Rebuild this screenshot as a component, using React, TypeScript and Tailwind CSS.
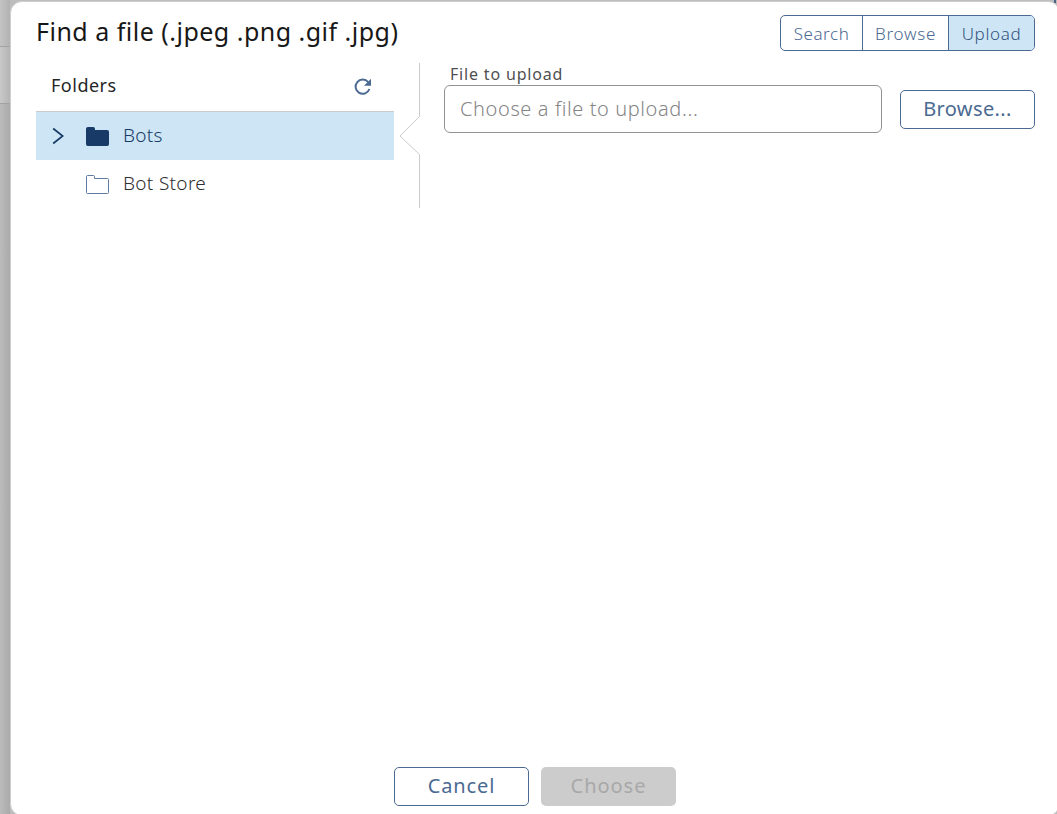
import React, { useState } from "react";

const tabs = [
  { name: "Search", width: "w-[82px]", spacing: "tracking-[0.55px]" },
  { name: "Browse", width: "w-[86px]", spacing: "tracking-[0.75px]" },
  { name: "Upload", width: "w-[85px]", spacing: "tracking-[0.65px]" },
];

function RefreshIcon() {
  return (
    <svg width="18" height="18" viewBox="0 0 18 18" fill="none">
      <path d="M14.2 4.2A7.1 7.1 0 1 0 15.4 11" stroke="#4b6a92" strokeWidth="2" />
      <path d="M17 .8v7h-7z" fill="#4b6a92" />
    </svg>
  );
}

function FolderIcon({ filled = false }: { filled?: boolean }) {
  return (
    <svg width="23" height="19" viewBox="0 0 23 19">
      <path
        d="M1.500.5h6q1 0 1 1v2h13q1 0 1 1v13q0 1-1 1h-20q-1 0-1-1v-16q0-1 1-1z"
        fill={filled ? "#173b66" : "#ffffff"}
        stroke={filled ? "#173b66" : "#5f7ba1"}
      />
    </svg>
  );
}

export default function App() {
  const [active, setActive] = useState("Upload");
  return (
    <div className="relative flex h-[814px] w-[1057px] overflow-hidden bg-[#bdbdbd] font-['Noto_Sans',sans-serif]">
      <span className="absolute right-px top-0 h-[3px] w-[2px] bg-[#4b6482]" />
      <aside className="flex w-[10px] shrink-0 flex-col bg-linear-to-r from-[#bcbcbc] to-[#aaaaaa]">
        <div className="h-[47px] border-b border-[#a2a2a2] bg-linear-to-r from-[#c4c4c4] to-[#b2b2b2]" />
        <div className="h-[57px] border-b border-[#a2a2a2] bg-linear-to-r from-[#c8c8c8] to-[#b5b5b5]" />
      </aside>
      <main className="mt-px flex h-[815px] w-[1050px] shrink-0 flex-col rounded-xl border border-[#cfcfcf] bg-white">
        <header className="flex h-[61px] shrink-0 items-start justify-between pl-[25px] pr-[24px]">
          <h1 className="mt-[11px] whitespace-nowrap text-[25px] leading-9 tracking-[0.49px] text-[#171717]">
            Find a file (.jpeg .png .gif .jpg)
          </h1>
          <nav className="mt-[13px] flex h-9 overflow-hidden rounded-[5px] border border-[#4b6a92]">
            {tabs.map((t) => (
              <button
                key={t.name}
                onClick={() => setActive(t.name)}
                className={`${t.width} ${t.spacing} h-full border-r border-[#4b6a92] pt-[2px] text-[17px] font-light last:border-r-0 ${
                  active === t.name ? "bg-[#cde5f5] text-[#33547f]" : "text-[#4b6a92]"
                }`}
              >
                {t.name}
              </button>
            ))}
          </nav>
        </header>
        <div className="flex h-[145px] shrink-0 pl-[25px]">
          <section className="w-[358px]">
            <div className="flex h-[48px] items-center justify-between pl-[15px] pr-[22px]">
              <h2 className="pb-1 text-[18px] leading-[38px] tracking-[0.5px] text-[#262626]">Folders</h2>
              <RefreshIcon />
            </div>
            <div className="flex h-[49px] items-center border-t border-[#c8cacc] bg-[#cde5f5] pl-[16px]">
              <svg width="12" height="18" viewBox="0 0 12 18" fill="none">
                <path d="M1.200 1.500 10.700 9 1.200 16.500" stroke="#173b66" strokeWidth="1.700" />
              </svg>
              <div className="ml-[22px]">
                <FolderIcon filled />
              </div>
              <span className="ml-[14px] pb-[2px] text-[19px] font-light tracking-[0.3px] text-[#173b66]">Bots</span>
            </div>
            <div className="flex h-12 items-center pl-[50px]">
              <div className="pt-px">
                <FolderIcon />
              </div>
              <span className="ml-[14px] pb-[2px] text-[19px] font-light tracking-[0.32px] text-[#2d2d2d]">Bot Store</span>
            </div>
          </section>
          <svg className="ml-[5px]" width="22" height="145" viewBox="0 0 22 145" fill="none">
            <path d="M20.500 0V53.500L1 73 20.500 91.500V145" stroke="#cbcbcb" />
          </svg>
          <section className="ml-[23px] flex w-[591px] items-start justify-between">
            <div className="w-[438px]">
              <label className="block h-[22px] pl-[6px] text-[16px] leading-[22px] tracking-[0.82px] text-[#505050]">
                File to upload
              </label>
              <input
                placeholder="Choose a file to upload..."
                className="block h-12 w-full rounded-[6px] border border-[#929292] px-[15px] pb-[2px] text-[20px] font-light tracking-[0.6px] text-[#555555] placeholder:text-[#868686]"
              />
            </div>
            <button className="mt-[27px] h-[39px] w-[135px] rounded-[5px] border border-[#4b6a92] pb-[2px] text-[20px] tracking-[0.38px] text-[#4b6a92]">
              Browse...
            </button>
          </section>
        </div>
        <footer className="mt-auto mb-[9px] flex h-[39px] gap-3 pl-[383px]">
          <button className="w-[135px] rounded-[5px] border border-[#4b6a92] pb-[2px] text-[20px] tracking-[0.9px] text-[#4b6a92]">
            Cancel
          </button>
          <button disabled className="w-[135px] rounded-[5px] bg-[#cccccc] pb-[2px] text-[20px] tracking-[0.95px] text-[#a8a8a8]">
            Choose
          </button>
        </footer>
      </main>
    </div>
  );
}
